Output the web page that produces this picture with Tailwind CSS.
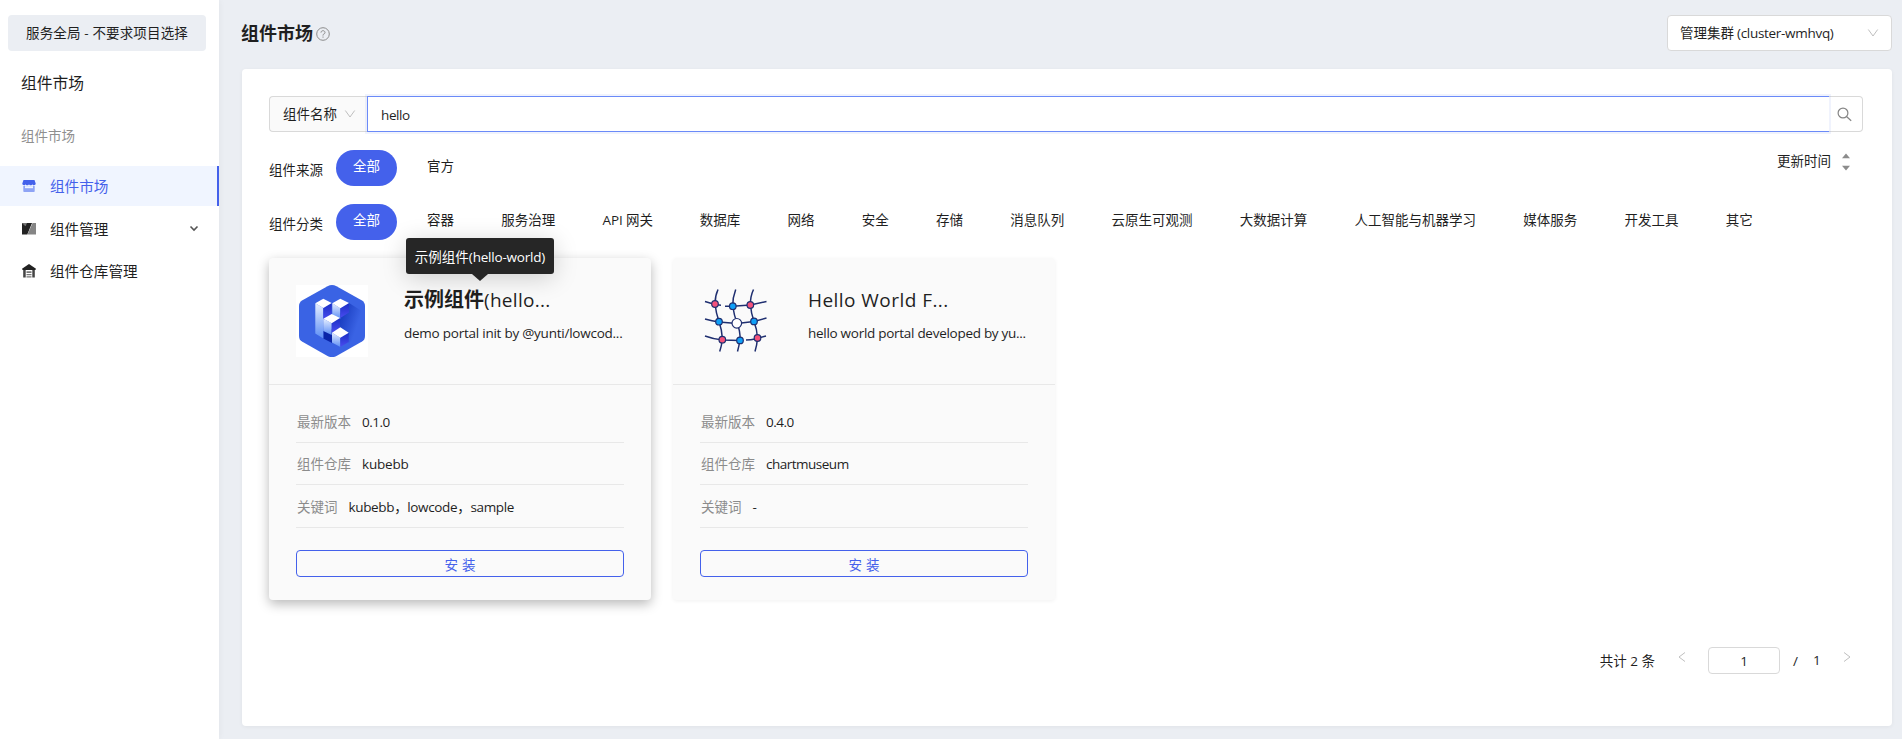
<!DOCTYPE html>
<html lang="zh-CN">
<head>
<meta charset="utf-8">
<title>组件市场</title>
<script src="https://cdn.jsdelivr.net/npm/@tailwindcss/browser@4"></script>
</head>
<body class="flex h-[739px] w-[1902px] overflow-hidden bg-[#ebeef3] font-['Open_Sans','Noto_Sans_CJK_SC',sans-serif] text-[13.5px] leading-5 text-[#1f1f1f]">

<!-- Sidebar -->
<aside class="flex w-[219px] shrink-0 flex-col bg-white shadow-[1px_0_6px_rgba(0,0,0,0.04)]">
  <div class="mx-2 mt-[15px] flex h-9 w-[198px] items-center justify-center whitespace-nowrap rounded bg-[#ebeef3] tracking-[0.15px]">服务全局 - 不要求项目选择</div>
  <div class="mt-5 px-[21px] text-[15.75px] leading-6">组件市场</div>
  <div class="mt-[31px] px-[21px] text-[#8f8f8f]">组件市场</div>
  <nav class="mt-5 flex flex-col text-[14.6px]">
    <a class="flex h-10 items-center border-r-2 border-[#4461eb] bg-[#f0f5ff] pl-[22px] text-[#4461eb]">
      <svg class="mr-[14px] size-[14px]" viewBox="0 0 14 14"><path d="M1.500 1h11l1.200 3.600c0 1-.8 1.700-1.700 1.700s-1.700-.6-1.700-1.300c0 .7-.7 1.300-1.600 1.300S7 5.700 7 5c0 .7-.8 1.300-1.700 1.300S3.700 5.700 3.700 5c0 .7-.8 1.300-1.700 1.300S.3 5.600.3 4.600z" fill="#4461eb"/><path d="M1.300 7h11.400v5.200c0 .5-.3.8-.8.8H2.100c-.5 0-.8-.3-.8-.8z" fill="#8fa4f5"/><path d="M3 7.200h8v2H3z" fill="#f0f5ff"/></svg>
      组件市场
    </a>
    <a class="mt-0.5 flex h-[42px] items-center pl-[22px]">
      <svg class="mr-[14px] size-[14px]" viewBox="0 0 14 14"><path d="M0 1L3.500 4 8 1h2L5.300 12.500H0z" fill="#222"/><path d="M0 1h10L3.500 4.500z" fill="#222"/><path d="M.5 1l3 3.200L5 1z" fill="#777"/><path d="M10.500 1H14v11.500H5.500z" fill="#858585"/></svg>
      组件管理
      <svg class="ml-auto mr-5 size-[10px]" viewBox="0 0 10 10"><path d="M1.500 2.500L5 6 8.500 2.500" fill="none" stroke="#555" stroke-width="1.600"/></svg>
    </a>
    <a class="flex h-[42px] items-center pl-[22px]">
      <svg class="mr-[14px] size-[14px]" viewBox="0 0 14 14"><path d="M7 0l7 4.700-.6 1.300H.6L0 4.700z" fill="#222"/><path d="M1.200 6h2.500v7.500H1.200zM10.300 6h2.500v7.500h-2.500z" fill="#444"/><path d="M4.500 7.300h5v1.600h-5zM4.500 10h5v1.200h-5zM4.500 12.300h5v1.200h-5z" fill="#777"/></svg>
      组件仓库管理
    </a>
  </nav>
</aside>

<main class="flex grow flex-col pl-[23px] pr-[10px] pt-[15px]">
  <header class="flex h-9 items-center">
    <h1 class="-ml-px text-[18px] font-bold leading-6">组件市场</h1>
    <svg class="ml-[3px] mt-0.5 size-[14px]" viewBox="0 0 14 14" fill="none" stroke="#8c8c8c" stroke-width="1"><circle cx="7" cy="7" r="6.300"/><path d="M5 5.600C5 4.400 5.900 3.700 7 3.700s2 .7 2 1.800c0 .9-.6 1.300-1.200 1.600-.5.2-.8.500-.8 1.100v.4M7 9.500v1.200"/></svg>
    <div class="ml-auto flex h-9 w-[225px] items-center rounded border border-[#d9d9d9] bg-white px-3">管理集群<span class="ml-[3px] tracking-[-0.3px]">(cluster-wmhvq)</span>
      <svg class="ml-auto size-3" viewBox="0 0 12 12"><path d="M1.300 2.500L6 9l4.700-6.500" fill="none" stroke="#bfbfbf" stroke-width="1"/></svg>
    </div>
  </header>

  <section class="mt-[18px] flex h-[657px] flex-col rounded bg-white px-[27px] pt-[27px] shadow-[0_1px_4px_rgba(0,0,0,0.05)]">
    <!-- Search -->
    <div class="flex h-9 w-[1594px]">
      <div class="flex w-[98px] items-center rounded-l border border-r-0 border-[#d9d9d9] bg-[#fafafa] pl-[13px]">组件名称
        <svg class="ml-[7px] size-3" viewBox="0 0 12 12"><path d="M1.300 2.500L6 9l4.700-6.500" fill="none" stroke="#bfbfbf" stroke-width="1"/></svg>
      </div>
      <div class="z-10 flex grow items-center border border-r-0 border-[#6b8af8] bg-white pl-[13px] pt-px tracking-[-0.4px] shadow-[0_0_0_2px_rgba(68,97,235,0.08)]">hello</div>
      <div class="flex w-[34px] items-center justify-center rounded-r border border-l-0 border-[#d9d9d9] bg-white pr-0.5">
        <svg class="size-[15px]" viewBox="0 0 15 15" fill="none" stroke="#858585" stroke-width="1.200"><circle cx="6" cy="6" r="4.900"/><path d="M9.500 9.500l4.700 4.300"/></svg>
      </div>
    </div>

    <!-- Filters -->
    <div class="mt-[18px] flex h-9">
      <div class="w-[67px] pt-[10px]">组件来源</div>
      <div class="flex h-9 w-[61px] justify-center rounded-full bg-[#4461eb] pt-[6px] text-white">全部</div>
      <div class="ml-[30px] pt-[6px]">官方</div>
      <div class="ml-auto mr-[14px] flex pt-px"><span>更新时间</span>
        <svg class="ml-[10px] mt-0.5 h-[18px] w-[10px]" viewBox="0 0 10 18" fill="#8c8c8c"><path d="M5 .5l4 4.700H1zM5 17.500l4-4.700H1z"/></svg>
      </div>
    </div>
    <div class="mt-[18px] flex h-9 whitespace-nowrap">
      <div class="w-[67px] pt-[10px]">组件分类</div>
      <div class="flex h-9 w-[61px] justify-center rounded-full bg-[#4461eb] pt-[6px] text-white">全部</div>
      <div class="ml-[30px] flex gap-[47.25px] pt-[6px]">
        <span>容器</span><span>服务治理</span><span class="w-[50px] tracking-[-0.1px]">API 网关</span><span>数据库</span><span>网络</span><span>安全</span><span>存储</span><span>消息队列</span><span>云原生可观测</span><span>大数据计算</span><span>人工智能与机器学习</span><span>媒体服务</span><span>开发工具</span><span>其它</span>
      </div>
    </div>

    <!-- Component cards -->
    <div class="mt-[18px] flex gap-[22px]">
      <article class="h-[342px] w-[382px] rounded bg-[#fafafa] shadow-[0_4px_12px_rgba(0,0,0,0.28)]">
        <div class="flex h-[127px] border-b border-[#e8e8e8] pl-[27px] pt-[27px]">
          <svg class="size-[72px] bg-white" viewBox="0 0 72 72">
            <defs>
              <linearGradient id="a" x1="0" y1="0" x2="0" y2="1"><stop offset="0" stop-color="#e6efff"/><stop offset="1" stop-color="#5c8df5"/></linearGradient>
              <linearGradient id="b" x1="0" y1="0" x2="0" y2="1"><stop offset="0" stop-color="#1a2fc4"/><stop offset="1" stop-color="#4a4cf0"/></linearGradient>
              <linearGradient id="c" x1="0" y1="0" x2="1" y2=".4"><stop offset="0.1" stop-color="#0a2bb0"/><stop offset=".85" stop-color="#3a63e4"/></linearGradient>
            </defs>
            <path d="M31.500 1.200Q36-1.200 40.500 1.200L66 15.500Q69 17.500 69 21V51Q69 54.500 66 56.500L40.500 71Q36 73.200 31.500 71L6 56.500Q3 54.500 3 51V21Q3 17.500 6 15.500Z" fill="#3a63e4"/>
            <path d="M53 18l16 10v20L52.700 58 36 38z" fill="url(#c)"/>
            <path d="M27.300 46L36 44v14l-8.700-4.500z" fill="#0a24a8"/>
            <path d="M19.300 18.300l8 4.700v30.500l-8-5z" fill="url(#a)"/>
            <path d="M27.300 23l8.400-5v13l-8.400 4z" fill="url(#b)"/>
            <path d="M27.300 13.700l8.400 4.300-8.400 5-8-4.700z" fill="#fff"/>
            <path d="M36.300 18.300l8 5V34l-8-4z" fill="url(#a)"/><path d="M44.300 23.300L53 18v9.500L44.300 33z" fill="url(#b)"/>
            <path d="M44.300 13.700L53 18l-8.700 5.300-8-5z" fill="#fff"/>
            <path d="M27.300 33.700l8.400 4.600V50l-8.400-4z" fill="url(#a)"/><path d="M35.700 38.300L44 33v10l-8.300 5z" fill="url(#b)"/>
            <path d="M35.700 29l8.300 4-8.300 5.300-8.400-4.600z" fill="#fff"/>
            <path d="M36 47.700l8.300 5V62L36 57.500z" fill="url(#a)"/><path d="M44.300 52.700l8.400-5V57l-8.400 5z" fill="url(#b)"/>
            <path d="M44.300 42.300l8.400 5.400-8.400 5-8.300-5z" fill="#fff"/>
          </svg>
          <div class="relative ml-9 whitespace-nowrap">
            <h2 class="mt-[3px] text-[20px] font-bold leading-6">示例组件<span class="text-[19px] font-normal tracking-[0.3px]">(hello...</span></h2>
            <p class="mt-[11px] tracking-[-0.24px]">demo portal init by @yunti/lowcod...</p>
            <!-- Tooltip -->
            <div class="absolute left-[2px] top-[-47px] z-20 flex h-9 w-[148px] items-center justify-center rounded-[3px] bg-[#262626] pt-0.5 text-white shadow-[0_4px_24px_rgba(0,0,0,0.18)]">示例组件<span class="tracking-[-0.2px]">(hello-world)</span>
              <svg class="absolute left-[66px] top-9 h-[7px] w-4" viewBox="0 0 16 7"><path d="M0 0h16L8 7z" fill="#262626"/></svg>
            </div>
          </div>
        </div>
        <div class="px-[27px] pt-[16px]">
          <div class="flex h-[42px] items-center gap-[11px] border-b border-[#e8e8e8] pl-px"><span class="text-[#8c8c8c]">最新版本</span><span class="tracking-[-0.5px]">0.1.0</span></div>
          <div class="flex h-[42px] items-center gap-[11px] border-b border-[#e8e8e8] pl-px pt-px"><span class="text-[#8c8c8c]">组件仓库</span><span class="tracking-[-0.2px]">kubebb</span></div>
          <div class="flex h-[43px] items-center gap-[11px] border-b border-[#e8e8e8] pl-px pt-px"><span class="text-[#8c8c8c]">关键词</span><span class="tracking-[-0.35px]">kubebb，lowcode，sample</span></div>
          <div class="mt-[22px] flex h-[27px] items-center justify-center gap-[4px] rounded border border-[#4461eb] pt-0.5 text-[#4461eb]"><span>安</span><span>装</span></div>
        </div>
      </article>

      <article class="h-[342px] w-[382px] rounded bg-[#fafafa] shadow-[0_1px_4px_rgba(0,0,0,0.06)]">
        <div class="flex h-[127px] border-b border-[#e8e8e8] pl-[27px] pt-[27px]">
          <svg class="size-[72px]" viewBox="5 10 72 72" fill="none" stroke="#1f2f70" stroke-width="1.500">
            <path d="M23 14.500Q20 21 20 29 21 38 24 46.500 27 55 27.500 64.500 26.500 71 24.700 76.500M40.700 14.500Q37.500 23 37.700 31 39 40 42 48 45.500 56 45 65 44 71 42.500 76.500M58.500 14.500Q55 22 55.500 30 56 38 59 46.500 62 54 62.500 63 62 70 60 76.500"/>
            <path d="M10 26.500L20 29.500 26 30.300M30 31.300L37.700 31.300 55.300 30 71.500 26.500M10 44Q17 46 24 47L42 48.500 59 46.500 71.500 43M10 61Q18 64 27.500 65L45 65.500 48 65M51 65Q56 65 60 64L71 61"/>
            <g stroke-width="1.200"><g fill="#f4527b"><circle cx="20" cy="29" r="3.300"/><circle cx="55.300" cy="30" r="3.300"/><circle cx="27.300" cy="64.700" r="3.300"/><circle cx="62.500" cy="63" r="3.300"/></g><g fill="#0fa0f8"><circle cx="37.800" cy="31.200" r="3.300"/><circle cx="24" cy="46.700" r="3.300"/><circle cx="59" cy="46.400" r="3.300"/><circle cx="45" cy="65.400" r="3.300"/></g><circle cx="41.800" cy="48.300" r="4.800" fill="#fff"/></g>
          </svg>
          <div class="ml-[36px] whitespace-nowrap">
            <h2 class="mt-[3px] text-[19px] leading-6 tracking-[0.45px]">Hello World F...</h2>
            <p class="mt-[11px] tracking-[-0.28px]">hello world portal developed by yu...</p>
          </div>
        </div>
        <div class="px-[27px] pt-[16px]">
          <div class="flex h-[42px] items-center gap-[11px] border-b border-[#e8e8e8] pl-px"><span class="text-[#8c8c8c]">最新版本</span><span class="tracking-[-0.5px]">0.4.0</span></div>
          <div class="flex h-[42px] items-center gap-[11px] border-b border-[#e8e8e8] pl-px pt-px"><span class="text-[#8c8c8c]">组件仓库</span><span class="tracking-[-0.5px]">chartmuseum</span></div>
          <div class="flex h-[43px] items-center gap-[11px] border-b border-[#e8e8e8] pl-px pt-px"><span class="text-[#8c8c8c]">关键词</span><span>-</span></div>
          <div class="mt-[22px] flex h-[27px] items-center justify-center gap-[4px] rounded border border-[#4461eb] pt-0.5 text-[#4461eb]"><span>安</span><span>装</span></div>
        </div>
      </article>
    </div>

    <!-- Pagination -->
    <div class="mr-3 mt-[47px] flex h-[27px] justify-end">
      <span class="pt-1">共计 2 条</span>
      <svg class="ml-[21px] mt-1 size-3" viewBox="0 0 12 12"><path d="M9 1.500L3 6l6 4.500" fill="none" stroke="#bfbfbf"/></svg>
      <span class="ml-[20px] flex w-[72px] items-center justify-center rounded border border-[#d9d9d9]">1</span>
      <span class="ml-[13px] w-[20px] pt-1">/</span>
      <span class="w-[8px] pt-[3px]">1</span>
      <svg class="ml-[20px] mt-1 size-3" viewBox="0 0 12 12"><path d="M3 1.500L9 6l-6 4.500" fill="none" stroke="#bfbfbf"/></svg>
    </div>
  </section>
</main>
</body>
</html>
